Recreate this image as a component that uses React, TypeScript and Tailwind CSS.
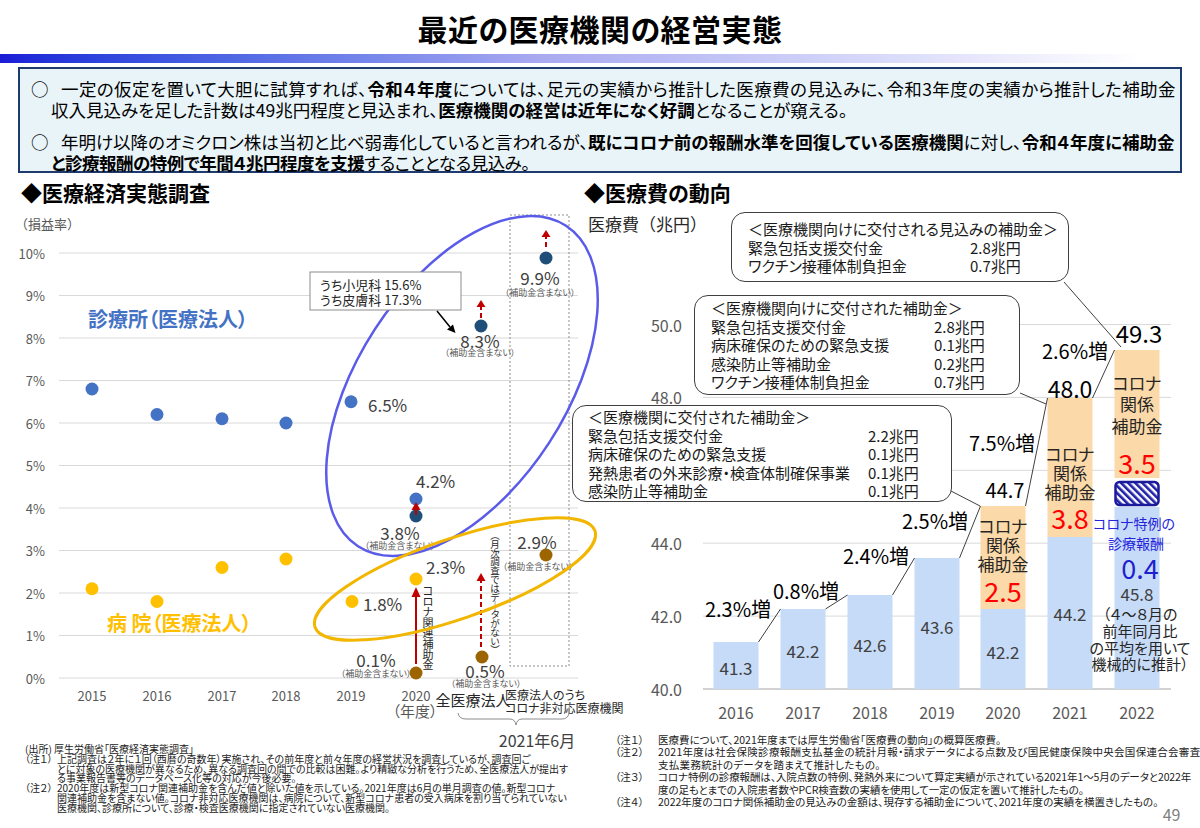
import React from 'react';

const AXIS = '#595959';
const VALUE = '#404040';
const RED = '#c00000';

// ---------- left chart: 医療経済実態調査 ----------

const yL = (v: number) => 678 - v * 42.5;

const CLINIC = [
  { x: 92, v: 6.8 },
  { x: 157, v: 6.2 },
  { x: 222, v: 6.1 },
  { x: 286, v: 6.0 },
  { x: 351, v: 6.5 },
];

const HOSPITAL = [
  { x: 92, v: 2.1 },
  { x: 157, v: 1.8 },
  { x: 222, v: 2.6 },
  { x: 286, v: 2.8 },
  { x: 352, v: 1.8 },
];

const YEARS_L = [
  { x: 92, label: '2015' },
  { x: 157, label: '2016' },
  { x: 222, label: '2017' },
  { x: 286, label: '2018' },
  { x: 351, label: '2019' },
  { x: 416, label: '2020' },
];

function UpArrow({ x, from, tip, head = 9, dashed = false }: { x: number; from: number; tip: number; head?: number; dashed?: boolean }) {
  return (
    <g>
      <line
        x1={x}
        x2={x}
        y1={from}
        y2={tip + head - 1}
        stroke={RED}
        strokeWidth={2}
        strokeDasharray={dashed ? '5 3' : undefined}
      />
      <polygon points={`${x - 4.5},${tip + head} ${x + 4.5},${tip + head} ${x},${tip}`} fill={RED} />
    </g>
  );
}

function Note({ x, y }: { x: number; y: number }) {
  return (
    <text x={x} y={y} fontSize={9} fill={AXIS} textAnchor="middle" dominantBaseline="central">
      （補助金含まない）
    </text>
  );
}

function Val({ x, y, anchor = 'middle', size = 17, children }: { x: number; y: number; anchor?: 'start' | 'middle' | 'end'; size?: number; children: React.ReactNode }) {
  return (
    <text x={x} y={y} fontSize={size} fill={VALUE} textAnchor={anchor} dominantBaseline="central">
      {children}
    </text>
  );
}

// vertical caption, one glyph per row so the spacing stays under control
function VText({ x, y, step, size, chars }: { x: number; y: number; step: number; size: number; chars: string[] }) {
  return (
    <g>
      {chars.map((c, i) => (
        <text key={i} x={x} y={y + step * i} fontSize={size} fill="#262626" textAnchor="middle" dominantBaseline="central">
          {c}
        </text>
      ))}
    </g>
  );
}

function SurveyChart() {
  return (
    <svg width={572} height={516} viewBox="0 212 572 516" className="overflow-visible">
      <text x={15} y={223} fontSize={13} fill={AXIS} dominantBaseline="central" className="[font-feature-settings:normal]">
        （損益率）
      </text>

      {Array.from({ length: 11 }, (_, k) => (
        <g key={k}>
          <line x1={59} x2={578} y1={yL(k)} y2={yL(k)} stroke="#d9d9d9" />
          <text x={45} y={yL(k)} fontSize={13} fill={AXIS} textAnchor="end" dominantBaseline="central">
            {k}%
          </text>
        </g>
      ))}

      <rect x={510} y={215} width={59} height={451} fill="none" stroke="#8c8c8c" strokeDasharray="2 2" />

      {YEARS_L.map((y) => (
        <text key={y.label} x={y.x} y={695} fontSize={13} fill={AXIS} textAnchor="middle" dominantBaseline="central">
          {y.label}
        </text>
      ))}
      <text x={415} y={710} fontSize={15} fill={AXIS} textAnchor="middle" dominantBaseline="central">
        （年度）
      </text>
      <text x={473} y={699} fontSize={15} fill="#262626" textAnchor="middle" dominantBaseline="central">
        全医療法人
      </text>
      <text x={505} y={694} fontSize={12} fill="#262626" dominantBaseline="central">
        医療法人のうち
      </text>
      <text x={505} y={707} fontSize={12} fill="#262626" dominantBaseline="central">
        コロナ非対応医療機関
      </text>
      <path
        d="M458 713 Q459 719 466 719 L510 719 Q515 719 516 725 Q517 719 522 719 L562 719 Q568 719 569 713"
        fill="none"
        stroke="#8c8c8c"
      />
      <text x={537} y={740} fontSize={16} fill={VALUE} textAnchor="middle" dominantBaseline="central">
        2021年6月
      </text>

      {/* group labels */}
      <text x={88} y={318} fontSize={20} fontWeight={700} fill="#4472c4" dominantBaseline="central">
        診療所（医療法人）
      </text>
      <text x={107} y={622} fontSize={20} fontWeight={700} fill="#ffc000" dominantBaseline="central">
        病 院（医療法人）
      </text>

      {/* clinics */}
      {CLINIC.map((d) => (
        <circle key={d.x} cx={d.x} cy={yL(d.v)} r={6.5} fill="#4472c4" />
      ))}
      <Val x={368} y={404} anchor="start">6.5%</Val>
      <circle cx={416} cy={499} r={6.5} fill="#4472c4" />
      <circle cx={416} cy={516} r={6.5} fill="#1f4e79" />
      <UpArrow x={416} from={515} tip={502} head={8} />
      <Val x={416} y={480} anchor="start">4.2%</Val>
      <Val x={400} y={532}>3.8%</Val>
      <Note x={400} y={545} />

      <circle cx={481} cy={326} r={6.5} fill="#1f4e79" />
      <UpArrow x={481} from={318} tip={300} head={7} dashed />
      <Val x={480} y={340}>8.3%</Val>
      <Note x={480} y={352} />

      <circle cx={546} cy={258} r={6.5} fill="#1f4e79" />
      <UpArrow x={546} from={247} tip={230} head={7} dashed />
      <Val x={540} y={277}>9.9%</Val>
      <Note x={540} y={292} />

      {/* hospitals */}
      {HOSPITAL.map((d) => (
        <circle key={d.x} cx={d.x} cy={yL(d.v)} r={6.5} fill="#ffc000" />
      ))}
      <Val x={363} y={603} anchor="start">1.8%</Val>
      <circle cx={416} cy={579} r={6.5} fill="#ffc000" />
      <Val x={426} y={566} anchor="start">2.3%</Val>
      <circle cx={416} cy={673} r={6.5} fill="#9c6500" />
      <UpArrow x={416} from={664} tip={587} head={10} />
      <Val x={376} y={659}>0.1%</Val>
      <Note x={376} y={673} />
      <VText x={428} y={590} step={10.6} size={11} chars={['コ', 'ロ', 'ナ', '関', '連', '補', '助', '金']} />

      <circle cx={482} cy={657} r={6.5} fill="#9c6500" />
      <UpArrow x={481} from={647} tip={573} head={8} dashed />
      <Val x={485} y={670}>0.5%</Val>
      <Note x={486} y={683} />
      <VText
        x={495}
        y={535}
        step={8.8}
        size={9.5}
        chars={['︵', '月', '次', '調', '査', 'で', 'は', 'デ', '｜', 'タ', 'が', 'な', 'い', '︶']}
      />

      <circle cx={546} cy={555} r={6.5} fill="#9c6500" />
      <Val x={537} y={541}>2.9%</Val>
      <Note x={538} y={566} />

      {/* circled groups */}
      <ellipse cx={462} cy={386} rx={191} ry={104} fill="none" stroke="#5b5bea" strokeWidth={2.5} transform="rotate(-57 462 386)" />
      <ellipse cx={455} cy={579} rx={148} ry={40} fill="none" stroke="#f2b600" strokeWidth={3} transform="rotate(-19 455 579)" />

      {/* sub-specialty callout */}
      <rect x={310} y={272} width={151} height={38} fill="#fff" stroke="#8c8c8c" />
      <text x={320} y={284} fontSize={13} fill="#262626" dominantBaseline="central">
        うち小児科 15.6%
      </text>
      <text x={320} y={299} fontSize={13} fill="#262626" dominantBaseline="central">
        うち皮膚科 17.3%
      </text>
      <line x1={437} y1={311} x2={450} y2={327} stroke="#000" strokeWidth={1.5} />
      <polygon points="447,329.5 453,324.5 455.5,333" fill="#000" />
    </svg>
  );
}

// ---------- right chart: 医療費の動向 ----------

const yR = (v: number) => 689 - (v - 40) * 36.45;
const BX = [736, 803, 870, 937, 1003, 1070, 1137];
const BW = 45;

const BLUE_BARS = [
  { x: BX[0], top: 642, label: '41.3', ly: 667 },
  { x: BX[1], top: 609, label: '42.2', ly: 650 },
  { x: BX[2], top: 595, label: '42.6', ly: 644 },
  { x: BX[3], top: 558, label: '43.6', ly: 626 },
  { x: BX[4], top: 609, label: '42.2', ly: 651 },
  { x: BX[5], top: 537, label: '44.2', ly: 613 },
  { x: BX[6], top: 507, label: '', ly: 0 },
];

const ORANGE = [
  { x: BX[4], top: 506, bottom: 609, lines: [525, 544, 563], red: '2.5', ry: 590 },
  { x: BX[5], top: 398, bottom: 537, lines: [453, 472, 491], red: '3.8', ry: 517 },
  { x: BX[6], top: 350, bottom: 478, lines: [382, 403, 425], red: '3.5', ry: 462 },
];

const GROWTH = [
  { x: 738, y: 608, t: '2.3%増' },
  { x: 806, y: 590, t: '0.8%増' },
  { x: 876, y: 555, t: '2.4%増' },
  { x: 935, y: 520, t: '2.5%増' },
  { x: 1002, y: 442, t: '7.5%増' },
  { x: 1075, y: 350, t: '2.6%増' },
];

const LINKS = [
  [758.5, 642, 780.5, 609],
  [825.5, 609, 847.5, 595],
  [892.5, 595, 914.5, 558],
  [959.5, 558, 980.5, 506],
  [1025.5, 506, 1047.5, 398],
  [1092.5, 398, 1114.5, 350],
  [1064, 282, 1121, 347],
  [1020, 393, 1046, 404],
  [951, 491, 980, 506],
];

function CostChart() {
  return (
    <svg width={628} height={516} viewBox="572 212 628 516" className="absolute inset-0 overflow-visible">
      <defs>
        <pattern id="hatch" width="5" height="5" patternUnits="userSpaceOnUse" patternTransform="rotate(-45)">
          <rect width="5" height="5" fill="#fff" />
          <rect width="2.6" height="5" fill="#1f1fa8" />
        </pattern>
      </defs>

      <text x={588} y={223} fontSize={17} fill="#262626" dominantBaseline="central" className="[font-feature-settings:normal]">
        医療費（兆円）
      </text>

      {[40, 42, 44, 46, 48, 50].map((v) => (
        <g key={v}>
          <line x1={703} x2={1171} y1={yR(v)} y2={yR(v)} stroke={v === 40 ? '#a6a6a6' : '#d9d9d9'} />
          <text x={682} y={yR(v)} fontSize={16} fill={AXIS} textAnchor="end" dominantBaseline="central">
            {v.toFixed(1)}
          </text>
        </g>
      ))}

      {BLUE_BARS.map((b) => (
        <g key={b.x}>
          <rect x={b.x - BW / 2} y={b.top} width={BW} height={689 - b.top} fill="#c6dbf7" />
          {b.label && <Val x={b.x} y={b.ly}>{b.label}</Val>}
        </g>
      ))}

      {ORANGE.map((o) => (
        <g key={o.x}>
          <rect x={o.x - BW / 2} y={o.top} width={BW} height={o.bottom - o.top} fill="#fcd9a8" />
          {['コロナ', '関係', '補助金'].map((t, i) => (
            <text key={t} x={o.x} y={o.lines[i]} fontSize={17} fill="#262626" textAnchor="middle" dominantBaseline="central">
              {t}
            </text>
          ))}
          <text x={o.x} y={o.ry} fontSize={27} fill="#ff0000" textAnchor="middle" dominantBaseline="central">
            {o.red}
          </text>
        </g>
      ))}

      <rect x={BX[6] - BW / 2 + 1} y={482} width={BW - 2} height={23} rx={4} fill="url(#hatch)" stroke="#1a1a9c" strokeWidth={2.5} />

      <text x={1134} y={523} fontSize={14} fill="#2424dc" textAnchor="middle" dominantBaseline="central">
        コロナ特例の
      </text>
      <text x={1136} y={543} fontSize={14} fill="#2424dc" textAnchor="middle" dominantBaseline="central">
        診療報酬
      </text>
      <text x={1140} y={567} fontSize={27} fill="#1f1fd0" textAnchor="middle" dominantBaseline="central">
        0.4
      </text>
      <Val x={1137} y={593}>45.8</Val>
      {[
        ['（４～８月の', 613],
        ['前年同月比', 630],
        ['の平均を用いて', 647],
        ['機械的に推計）', 663],
      ].map(([t, y]) => (
        <text key={t as string} x={1140} y={y as number} fontSize={15} fill="#262626" textAnchor="middle" dominantBaseline="central">
          {t}
        </text>
      ))}

      {LINKS.map(([x1, y1, x2, y2], i) => (
        <line key={i} x1={x1} y1={y1} x2={x2} y2={y2} stroke="#404040" strokeWidth={1} />
      ))}

      {GROWTH.map((g) => (
        <text key={g.t + g.x} x={g.x} y={g.y} fontSize={20} fill="#000" textAnchor="middle" dominantBaseline="central">
          {g.t}
        </text>
      ))}
      <text x={1005} y={489} fontSize={20} fill="#000" textAnchor="middle" dominantBaseline="central">
        44.7
      </text>
      <text x={1070} y={388} fontSize={23} fill="#000" textAnchor="middle" dominantBaseline="central">
        48.0
      </text>
      <text x={1139} y={332} fontSize={24} fill="#000" textAnchor="middle" dominantBaseline="central">
        49.3
      </text>

      {['2016', '2017', '2018', '2019', '2020', '2021', '2022'].map((t, i) => (
        <text key={t} x={BX[i]} y={712} fontSize={16} fill={AXIS} textAnchor="middle" dominantBaseline="central">
          {t}
        </text>
      ))}
    </svg>
  );
}

interface CalloutProps {
  title: string;
  rows: [string, string][];
  className: string;
  labelCol: string;
}

function Callout({ title, rows, className, labelCol }: CalloutProps) {
  return (
    <div className={`absolute rounded-[14px] border border-[#404040] bg-white text-[15px] leading-[18.6px] text-[#1a1a1a] ${className}`}>
      <div className="whitespace-nowrap">{title}</div>
      {rows.map(([label, value]) => (
        <div key={label} className={`grid whitespace-nowrap ${labelCol}`}>
          <span>{label}</span>
          <span>{value}</span>
        </div>
      ))}
    </div>
  );
}

// ---------- page ----------

export default function App() {
  return (
    <div className="relative h-[828px] w-[1200px] overflow-hidden bg-white font-['Noto_Sans_CJK_JP','Noto_Sans',sans-serif] text-black [font-feature-settings:'palt']">
      <header className="flex h-[50px] items-center justify-center pt-[6px]">
        <h1 className="text-[30px] font-bold tracking-[0.5px]">最近の医療機関の経営実態</h1>
      </header>
      <div className="mt-[4px] h-[9px] bg-linear-to-r from-[#1c1cd6] via-[#a9a9f0] via-45% to-white to-95%" />

      <section className="mx-[18px] mt-[4px] h-[106px] border-2 border-[#1f3a6e] bg-[#e9f4f9] pl-[11px] pt-[9px] text-[17.5px] leading-[21px] whitespace-nowrap">
        <div className="flex">
          <span className="w-[30px] shrink-0">○</span>
          <span className="tracking-[0.4px]">
            一定の仮定を置いて大胆に試算すれば、<b>令和４年度</b>については、足元の実績から推計した医療費の見込みに、令和3年度の実績から推計した補助金
          </span>
        </div>
        <div className="pl-[20px]">
          収入見込みを足した計数は49兆円程度と見込まれ、<b>医療機関の経営は近年になく好調</b>となることが窺える。
        </div>
        <div className="mt-[11px] flex">
          <span className="w-[30px] shrink-0">○</span>
          <span>
            年明け以降のオミクロン株は当初と比べ弱毒化していると言われるが、<b>既にコロナ前の報酬水準を回復している医療機関</b>に対し、<b>令和４年度に補助金</b>
          </span>
        </div>
        <div className="pl-[20px] tracking-[-0.5px]">
          <b>と診療報酬の特例で年間４兆円程度を支援</b>することとなる見込み。
        </div>
      </section>

      <div className="flex h-[555px]">
        <div className="w-[572px] shrink-0">
          <h2 className="flex h-[39px] items-center pl-[21px] text-[21px] font-bold">◆医療経済実態調査</h2>
          <SurveyChart />
        </div>
        <div className="w-[628px] shrink-0">
          <h2 className="flex h-[39px] items-center pl-[12px] text-[21px] font-bold">◆医療費の動向</h2>
          <div className="relative h-[516px]">
            <CostChart />
            <Callout
              className="left-[159px] top-0 h-[70px] w-[338px] pl-[16px] pt-[7px]"
              labelCol="grid-cols-[222px_auto]"
              title="＜医療機関向けに交付される見込みの補助金＞"
              rows={[
                ['緊急包括支援交付金', '2.8兆円'],
                ['ワクチン接種体制負担金', '0.7兆円'],
              ]}
            />
            <Callout
              className="left-[122px] top-[83px] h-[100px] w-[326px] pl-[16px] pt-[3px]"
              labelCol="grid-cols-[223px_auto]"
              title="＜医療機関向けに交付された補助金＞"
              rows={[
                ['緊急包括支援交付金', '2.8兆円'],
                ['病床確保のための緊急支援', '0.1兆円'],
                ['感染防止等補助金', '0.2兆円'],
                ['ワクチン接種体制負担金', '0.7兆円'],
              ]}
            />
            <Callout
              className="left-0 top-[193px] h-[97px] w-[380px] pl-[15px] pt-[2px]"
              labelCol="grid-cols-[280px_auto]"
              title="＜医療機関に交付された補助金＞"
              rows={[
                ['緊急包括支援交付金', '2.2兆円'],
                ['病床確保のための緊急支援', '0.1兆円'],
                ['発熱患者の外来診療・検査体制確保事業', '0.1兆円'],
                ['感染防止等補助金', '0.1兆円'],
              ]}
            />
          </div>
        </div>
      </div>

      <footer className="flex text-[#1a1a1a]">
        <div className="w-[600px] shrink-0 pl-[25px] pt-[16px] text-[10px] leading-[9.8px] whitespace-nowrap">
          <div>(出所) 厚生労働省「医療経済実態調査」</div>
          <div className="flex">
            <span className="w-[32px] shrink-0">（注１）</span>
            <span>
              上記調査は２年に１回（西暦の奇数年）実施され、その前年度と前々年度の経営状況を調査しているが、調査回ご
              <br />
              とに対象の医療機関が異なるため、異なる調査回の間での比較は困難。より精緻な分析を行うため、全医療法人が提出す
              <br />
              る事業報告書等のデータベース化等の対応が今後必要。
            </span>
          </div>
          <div className="flex">
            <span className="w-[32px] shrink-0">（注２）</span>
            <span>
              2020年度は新型コロナ関連補助金を含んだ値と除いた値を示している。2021年度は6月の単月調査の値。新型コロナ
              <br />
              関連補助金を含まない値。コロナ非対応医療機関は、病院について、新型コロナ患者の受入病床を割り当てられていない
              <br />
              医療機関、診療所について、診療・検査医療機関に指定されていない医療機関。
            </span>
          </div>
        </div>
        <div className="flex-1 pl-[15px] pt-[6px]">
          <div className="text-[10.5px] leading-[12.4px] whitespace-nowrap">
            <div className="flex">
              <span className="w-[43px] shrink-0">（注１）</span>
              <span>医療費について、2021年度までは厚生労働省「医療費の動向」の概算医療費。</span>
            </div>
            <div className="flex">
              <span className="w-[43px] shrink-0">（注２）</span>
              <span className="tracking-[0.3px]">
                2021年度は社会保険診療報酬支払基金の統計月報・請求データによる点数及び国民健康保険中央会国保連合会審査
                <br />
                支払業務統計のデータを踏まえて推計したもの。
              </span>
            </div>
            <div className="flex">
              <span className="w-[43px] shrink-0">（注３）</span>
              <span className="tracking-[-0.1px]">
                コロナ特例の診療報酬は、入院点数の特例、発熱外来について算定実績が示されている2021年1～5月のデータと2022年
                <br />
                度の足もとまでの入院患者数やPCR検査数の実績を使用して一定の仮定を置いて推計したもの。
              </span>
            </div>
            <div className="flex">
              <span className="w-[43px] shrink-0">（注４）</span>
              <span>2022年度のコロナ関係補助金の見込みの金額は、現存する補助金について、2021年度の実績を横置きしたもの。</span>
            </div>
          </div>
          <div className="-mt-[3px] pr-[20px] text-right text-[16px] leading-[18px] text-[#7f7f7f]">49</div>
        </div>
      </footer>
    </div>
  );
}
